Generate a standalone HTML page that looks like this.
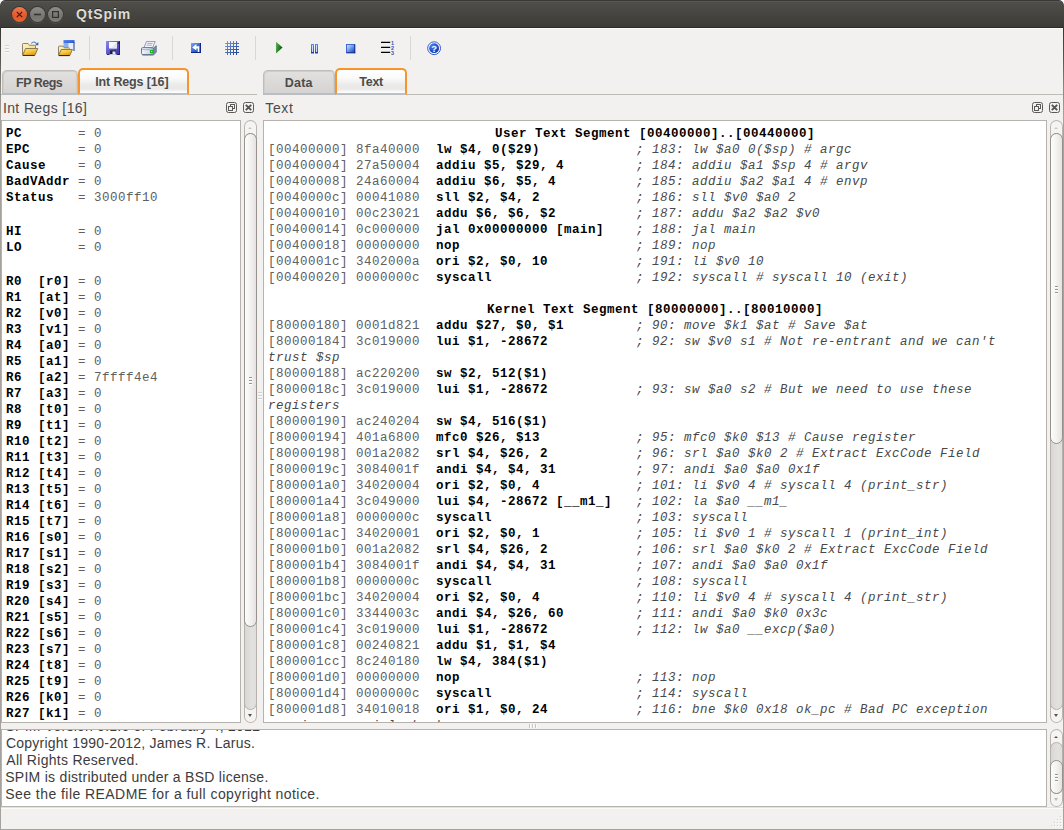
<!DOCTYPE html>
<html><head><meta charset="utf-8"><title>QtSpim</title>
<style>
*{box-sizing:border-box;margin:0;padding:0}
html,body{width:1064px;height:830px;overflow:hidden;background:#fff}
body{font-family:"Liberation Sans",sans-serif;position:relative}
.abs{position:absolute}
#win{position:absolute;left:0;top:0;width:1064px;height:830px;background:#f2f1f0;border-radius:5px 5px 0 0;overflow:hidden}
#bl,#br,#bb{position:absolute;background:#a5a29d}
#bl,#br{background:linear-gradient(#35342f 0,#55534e 30px,#8a8782 60px,#a5a29d 90px)}
#hl{position:absolute;left:1px;top:28px;width:1062px;height:1px;background:#fbfbfa}
#bl{left:0;top:27px;width:1px;height:803px}
#br{left:1063px;top:27px;width:1px;height:803px}
#bb{left:0;top:829px;width:1064px;height:1px}
#title{position:absolute;left:0;top:0;width:1064px;height:28px;border-radius:5px 5px 0 0;
 background:linear-gradient(#3a3935 0,#3a3935 1px,#59574f 1px,#59574f 2px,#4f4e49 2px,#3c3b37 27px,#2c2b28 27px)}
.tx{position:absolute;white-space:pre;line-height:20px}
.tx.title{font-weight:bold;color:#dfdbd2;text-shadow:0 -1px 0 rgba(0,0,0,.4)}
.tx.tb{font-weight:bold;color:#4c4c4c}
.tx.dk{color:#4a4a4a}
.tx.cn{color:#3c3c3c}
.wb{position:absolute;top:7px;width:15px;height:15px;border-radius:50%;box-shadow:0 0 0 1px rgba(40,38,34,.55),0 1px 0 1px rgba(255,255,255,.08)}
.wb.c{left:12px;background:linear-gradient(#f0794f,#e4572a 60%,#e8652f)}
.wb.g{background:linear-gradient(#8e8d87,#76756f 60%,#7d7c76)}
.wb svg{position:absolute;left:0;top:0}
/* panels */
.panel{position:absolute;background:#fff;border:1px solid #b6b2ad;overflow:hidden}
.mono{font-family:"Liberation Mono",monospace;font-size:12.5px;letter-spacing:0.4985px;line-height:16px;white-space:pre;color:#606060}
.mono b{color:#000;font-weight:bold}
.mono i{color:#484848;font-style:italic}
.ln{height:16px}
.bl{height:18px}
.hd{text-align:center}
/* scrollbars */
.sb{position:absolute;width:13px;border-radius:6.5px;background:#f5f4f3;box-shadow:inset 0 0 0 1px #b9b5b0}
.sb .tr{position:absolute;left:0;width:13px;border:1px solid #b5b1ac;border-radius:6.5px;background:linear-gradient(90deg,#d9d6d4,#e3e1df 60%,#e0dedc)}
.sb .sl{position:absolute;left:0;width:13px;border:1px solid #96938e;border-radius:6.5px;background:linear-gradient(90deg,#fdfdfd,#f3f2f1 50%,#e4e3e1)}
.sb .sl u{position:absolute;left:4px;width:3px;height:2px;background:linear-gradient(#98958f 50%,#fff 50%)}
.ar{position:absolute;left:4px;width:0;height:0;border-left:2.5px solid transparent;border-right:2.5px solid transparent}
.ar.up{border-bottom:2.5px solid #c9c7c3}
.ar.dn{border-top:3px solid #555451}
.ar.dn.dis{border-top-color:#bdbab6}
.ar.up.en{border-bottom-color:#555451}
/* dock title */
.dt{position:absolute;font-size:14.7px;line-height:20px;color:#4a4a4a;white-space:pre}
.db{position:absolute;width:11px;height:11px;border:1px solid #5b5a56;border-radius:2.5px}
/* tabs */
.tab{position:absolute;font-weight:bold;font-size:13.3px;color:#4c4c4c;text-align:center;white-space:pre}
.tab.in{top:70px;height:25px;border:1px solid #c0bdb8;border-bottom:2px solid #b9bec2;border-radius:5px 5px 0 0;background:linear-gradient(#e1e0de,#dad9d7 60%,#d4d3d1);box-shadow:inset 1px 1px 0 #d0cecb,inset -1px 0 0 #d0cecb}
.tab.ac{top:68px;height:27px;border:2px solid #f7952c;border-bottom:2px solid #bcc0c3;border-radius:5px 5px 0 0;background:linear-gradient(#fff 0,#fafafa 8px,#eaeae9 15px,#e9e8e7 19px,#fbfbfb 22px,#fff);line-height:22px}
.tl{position:absolute;top:94px;height:1px;background:#bfbcb7}
.sep{position:absolute;top:36px;width:1px;height:24px;background:#dad8d5}
.ic{position:absolute}
</style></head>
<body>
<div id="win">
 <div id="title">
  <div class="wb c"><svg width="15" height="15" viewBox="0 0 15 15"><path d="M4.8 4.8l5.4 5.4M10.2 4.8l-5.4 5.4" stroke="#3c1a10" stroke-width="1.1" fill="none"/></svg></div>
  <div class="wb g" style="left:30px"><svg width="15" height="15" viewBox="0 0 15 15"><path d="M4 7.5h7" stroke="#33322e" stroke-width="1.3" fill="none"/></svg></div>
  <div class="wb g" style="left:48px"><svg width="15" height="15" viewBox="0 0 15 15"><rect x="4.6" y="4.6" width="5.8" height="5.8" stroke="#33322e" stroke-width="1.2" fill="none"/></svg></div>
  <span class="tx title" style="left:75.90px;top:4.00px;font-size:14px;letter-spacing:0.900px">QtSpim</span>
 </div>

 <!-- toolbar -->
 <div class="abs" style="left:5px;top:45px;width:4px;height:8px;background:repeating-linear-gradient(#d3d1ce 0,#d3d1ce 1px,#fbfbfa 1px,#fbfbfa 2px,transparent 2px,transparent 3px)"></div>
 
 <svg width="0" height="0" style="position:absolute"><defs>
  <linearGradient id="gf" x1="0" y1="0" x2="0.6" y2="1"><stop offset="0" stop-color="#fde58a"/><stop offset="0.55" stop-color="#f7c63e"/><stop offset="1" stop-color="#dc9a12"/></linearGradient>
  <linearGradient id="gb" x1="0" y1="0" x2="1" y2="1"><stop offset="0" stop-color="#fdf4c2"/><stop offset="1" stop-color="#f0d578"/></linearGradient>
  <linearGradient id="gs" x1="0" y1="0" x2="1" y2="1"><stop offset="0" stop-color="#8c8aec"/><stop offset="0.5" stop-color="#5a57c9"/><stop offset="1" stop-color="#363398"/></linearGradient>
  <linearGradient id="gq" x1="0" y1="0" x2="1" y2="1"><stop offset="0" stop-color="#7ea5f2"/><stop offset="0.5" stop-color="#3b68d8"/><stop offset="1" stop-color="#102f9c"/></linearGradient>
  <linearGradient id="gg" x1="0" y1="0" x2="1" y2="1"><stop offset="0" stop-color="#7fa2dd"/><stop offset="1" stop-color="#17398a"/></linearGradient>
  <linearGradient id="gp" x1="0" y1="0" x2="1" y2="0.4"><stop offset="0" stop-color="#6bb06b"/><stop offset="0.5" stop-color="#2f8a2f"/><stop offset="1" stop-color="#0b560b"/></linearGradient>
  <linearGradient id="gst" x1="0" y1="0" x2="1" y2="1"><stop offset="0" stop-color="#cfe0fb"/><stop offset="0.5" stop-color="#6f97e8"/><stop offset="1" stop-color="#1f48bd"/></linearGradient>
  <linearGradient id="gpa" x1="0" y1="0" x2="0" y2="1"><stop offset="0" stop-color="#5f8ae6"/><stop offset="0.8" stop-color="#2f5ccc"/><stop offset="1" stop-color="#08237a"/></linearGradient>
  <linearGradient id="gw" x1="0" y1="0" x2="1" y2="1"><stop offset="0" stop-color="#5b8df0"/><stop offset="1" stop-color="#2a55c8"/></linearGradient>
  <linearGradient id="gpr" x1="0" y1="0" x2="1" y2="0"><stop offset="0" stop-color="#f4f6fb"/><stop offset="0.6" stop-color="#d5dcec"/><stop offset="1" stop-color="#8f9cb8"/></linearGradient>
  <radialGradient id="gh" cx="0.35" cy="0.3" r="0.8"><stop offset="0" stop-color="#4f86f2"/><stop offset="0.6" stop-color="#1f4fd0"/><stop offset="1" stop-color="#0a2a9a"/></radialGradient>
 </defs></svg>
 <!-- open file -->
 <svg class="ic" style="left:22px;top:40px" width="17" height="16" viewBox="0 0 17 16">
  <path d="M0.5 15V4.2q0-.7.7-.7H6l1.4 1.8h5.4q.7 0 .7.7V8" fill="url(#gb)" stroke="#8f8468" stroke-width="1"/>
  <path d="M0.6 15.4L3.6 8.5h12.2l-3 6.9z" fill="url(#gf)" stroke="#8b7a52" stroke-width="1" stroke-linejoin="round"/>
  <path d="M1 15.5h11.5" stroke="#3a2f14" stroke-width="1"/>
  <path d="M9.2 3.5q2.7-3 5.3.2" stroke="#5b7cb3" stroke-width="1.1" fill="none"/>
  <path d="M16.3 1.9v3.3h-3.2z" fill="#3a5f98"/>
 </svg>
 <!-- open window file -->
 <svg class="ic" style="left:58px;top:39px" width="17" height="18" viewBox="0 0 17 18">
  <rect x="5.5" y="1" width="11" height="11" fill="#e9effc"/>
  <rect x="5.5" y="1" width="11" height="3" fill="url(#gw)"/>
  <rect x="5.5" y="4" width="5" height="8" fill="#8fb0ee"/>
  <rect x="11.5" y="4" width="4" height="8" fill="#e6eefc"/>
  <rect x="15.5" y="3" width="1" height="9" fill="#20427e"/>
  <path d="M0.5 16.4V7.8q0-.7.7-.7H5l1.3 1.7h4.4q.7 0 .7.7V10" fill="url(#gb)" stroke="#8f8468" stroke-width="1"/>
  <path d="M0.6 16.5L3.2 10.5h11.2l-2.6 6z" fill="url(#gf)" stroke="#8b7a52" stroke-width="1" stroke-linejoin="round"/>
  <path d="M1 16.6h10.6" stroke="#2a200c" stroke-width="1"/>
 </svg>
 <!-- save -->
 <svg class="ic" style="left:106px;top:41px" width="14" height="14" viewBox="0 0 14 14">
  <path d="M0 0h14v14H1.3L0 12.7z" fill="url(#gs)"/>
  <rect x="13" y="0" width="1" height="14" fill="#25237a"/><rect x="1" y="13" width="13" height="1" fill="#25237a"/>
  <rect x="3" y="1" width="8" height="6.5" fill="#f7f8fc"/><path d="M11 1v6.5H5z" fill="#d6dbea" opacity=".7"/>
  <rect x="12" y="1.5" width="1" height="1.5" fill="#1c1a5a"/>
  <rect x="4" y="9.5" width="6" height="4.5" fill="#20203a"/><rect x="6.5" y="10.5" width="3" height="3" fill="#e4e6f0"/>
  <rect x="3.5" y="13" width="7" height="1" fill="#c8cad8"/>
 </svg>
 <!-- print -->
 <svg class="ic" style="left:141px;top:41px" width="16" height="15" viewBox="0 0 16 15">
  <path d="M12.6 7l2.7-2.4v6.6l-2.7 2.6z" fill="#7b89a6" stroke="#5f6e8d" stroke-width=".8" stroke-linejoin="round"/>
  <path d="M5.6 0.4h8.6l-2.6 6.2H3z" fill="#f4f6fb" stroke="#8290ab" stroke-width=".9" stroke-linejoin="round"/>
  <path d="M6.4 2.4h5.3M5.6 4.2h5.3" stroke="#9aa6bd" stroke-width=".9"/>
  <rect x="0.5" y="6.6" width="12.2" height="7" rx="1.4" fill="url(#gpr)" stroke="#6b7a99" stroke-width="1"/>
  <path d="M1.2 8.6h8" stroke="#9aa5bc" stroke-width=".8"/>
  <rect x="9" y="9" width="3.2" height="3.1" fill="#12b81c"/><rect x="10" y="9.9" width="1.2" height="1.2" fill="#a8ff70"/>
  <path d="M1.5 14h11" stroke="#5a6783" stroke-width=".9"/>
 </svg>
 <!-- reinit -->
 <svg class="ic" style="left:191px;top:43px" width="10" height="10" viewBox="0 0 10 10">
  <rect width="10" height="10" fill="url(#gq)"/><rect x="9" y="0" width="1" height="10" fill="#0b2686"/><rect x="0" y="9" width="10" height="1" fill="#0b2686"/>
  <path d="M1.2 4.4L5.4 1.1V3.3H8.3V9H6.7V5.5H5.4V7.6z" fill="#fff"/>
 </svg>
 <!-- grid -->
 <svg class="ic" style="left:225px;top:41px" width="14" height="14" viewBox="0 0 14 14">
  <path d="M2.5 0v14M5.5 0v14M8.5 0v14M11.5 0v14M0 2.5h14M0 5.5h14M0 8.5h14M0 11.5h14" stroke="url(#gg)" stroke-width="1" fill="none"/>
 </svg>
 <!-- run -->
 <svg class="ic" style="left:275px;top:41px" width="9" height="14" viewBox="0 0 9 14">
  <path d="M1 0.8L7.6 6.6L1 12.4z" fill="url(#gp)"/>
 </svg>
 <!-- pause -->
 <svg class="ic" style="left:311px;top:44px" width="8" height="10" viewBox="0 0 8 10">
  <rect x="0" y="0" width="3" height="9.4" fill="url(#gpa)"/><rect x="1" y="1" width="1" height="7" fill="#cddefb"/>
  <rect x="4" y="0" width="3" height="9.4" fill="url(#gpa)"/><rect x="5" y="1" width="1" height="7" fill="#cddefb"/>
 </svg>
 <!-- stop -->
 <svg class="ic" style="left:346px;top:44px" width="10" height="10" viewBox="0 0 10 10">
  <rect x="0" y="0" width="9.2" height="9.2" fill="#3e68d6"/>
  <rect x="8.2" y="0.5" width="1" height="8.7" fill="#0b2686"/><rect x="0.5" y="8.2" width="8.7" height="1" fill="#0b2686"/>
  <rect x="1" y="1" width="7.2" height="7.2" fill="url(#gst)"/>
 </svg>
 <!-- single step -->
 <svg class="ic" style="left:380px;top:39px" width="17" height="18" viewBox="0 0 17 18">
  <path d="M1 3.4h9.2M1 8.4h9.2M1 13.4h9.2" stroke="#000" stroke-width="1.4"/>
  <g font-family="Liberation Sans, sans-serif" font-weight="bold" font-size="5.4" fill="#2d55b5"><text x="11" y="5.6">1</text><text x="11" y="10.6">2</text><text x="11" y="15.6">3</text></g>
 </svg>
 <!-- help -->
 <svg class="ic" style="left:426px;top:40px" width="16" height="16" viewBox="0 0 16 16">
  <circle cx="8.1" cy="8.2" r="6.4" fill="#fff" stroke="#2f5ad0" stroke-width="1"/>
  <circle cx="8.1" cy="8.2" r="4.9" fill="url(#gh)"/>
  <text x="8.1" y="11.6" text-anchor="middle" font-family="Liberation Sans, sans-serif" font-weight="bold" font-size="9.5" fill="#fff">?</text>
 </svg>

 <div class="sep" style="left:89px"></div>
 <div class="sep" style="left:172px"></div>
 <div class="sep" style="left:255px"></div>
 <div class="sep" style="left:410px"></div>

 <!-- tabs -->
 <div class="tl" style="left:1px;width:256px"></div>
 <div class="tl" style="left:263px;width:800px"></div>
 <div class="tab in" style="left:2px;width:76px"></div><span class="tx tb" style="left:16.10px;top:73.00px;font-size:12.5px;letter-spacing:-0.517px">FP Regs</span>
 <div class="tab ac" style="left:78px;width:111px"></div><span class="tx tb" style="left:95.20px;top:72.00px;font-size:12.5px;letter-spacing:-0.133px">Int Regs [16]</span>
 <div class="tab in" style="left:263px;width:72px"></div><span class="tx tb" style="left:284.70px;top:73.00px;font-size:12.5px;letter-spacing:0.233px">Data</span>
 <div class="tab ac" style="left:335px;width:72px"></div><span class="tx tb" style="left:359.30px;top:72.00px;font-size:12.5px;letter-spacing:-0.267px">Text</span>

 <!-- dock titles -->
 <span class="tx dk" style="left:2.90px;top:98.00px;font-size:14px;letter-spacing:0.383px">Int Regs [16]</span>
 <span class="tx dk" style="left:265.20px;top:98.00px;font-size:14px;letter-spacing:0.700px">Text</span>
 
 <div class="db" style="left:226px;top:102px"><svg class="abs" style="left:0;top:0" width="9" height="9" viewBox="0 0 9 9"><rect x="3.5" y="1.5" width="4" height="4" fill="none" stroke="#5b5a56"/><rect x="1.5" y="3.5" width="4" height="4" fill="#f2f1f0" stroke="#5b5a56"/></svg></div>
 <div class="db" style="left:243px;top:102px"><svg class="abs" style="left:0;top:0" width="9" height="9" viewBox="0 0 9 9"><path d="M1.8 1.8l5.4 5.4M7.2 1.8l-5.4 5.4" stroke="#55544f" stroke-width="1.9" fill="none"/></svg></div>
 <div class="db" style="left:1032px;top:102px"><svg class="abs" style="left:0;top:0" width="9" height="9" viewBox="0 0 9 9"><rect x="3.5" y="1.5" width="4" height="4" fill="none" stroke="#5b5a56"/><rect x="1.5" y="3.5" width="4" height="4" fill="#f2f1f0" stroke="#5b5a56"/></svg></div>
 <div class="db" style="left:1049px;top:102px"><svg class="abs" style="left:0;top:0" width="9" height="9" viewBox="0 0 9 9"><path d="M1.8 1.8l5.4 5.4M7.2 1.8l-5.4 5.4" stroke="#55544f" stroke-width="1.9" fill="none"/></svg></div>

 <!-- left panel -->
 <div class="panel mono" style="left:1px;top:120px;width:240px;height:603px;padding:5px 0 0 4px"><div class="ln"><b>PC       </b>= 0</div><div class="ln"><b>EPC      </b>= 0</div><div class="ln"><b>Cause    </b>= 0</div><div class="ln"><b>BadVAddr </b>= 0</div><div class="ln"><b>Status   </b>= 3000ff10</div><div class="bl"></div><div class="ln"><b>HI       </b>= 0</div><div class="ln"><b>LO       </b>= 0</div><div class="bl"></div><div class="ln"><b>R0  [r0] </b>= 0</div><div class="ln"><b>R1  [at] </b>= 0</div><div class="ln"><b>R2  [v0] </b>= 0</div><div class="ln"><b>R3  [v1] </b>= 0</div><div class="ln"><b>R4  [a0] </b>= 0</div><div class="ln"><b>R5  [a1] </b>= 0</div><div class="ln"><b>R6  [a2] </b>= 7ffff4e4</div><div class="ln"><b>R7  [a3] </b>= 0</div><div class="ln"><b>R8  [t0] </b>= 0</div><div class="ln"><b>R9  [t1] </b>= 0</div><div class="ln"><b>R10 [t2] </b>= 0</div><div class="ln"><b>R11 [t3] </b>= 0</div><div class="ln"><b>R12 [t4] </b>= 0</div><div class="ln"><b>R13 [t5] </b>= 0</div><div class="ln"><b>R14 [t6] </b>= 0</div><div class="ln"><b>R15 [t7] </b>= 0</div><div class="ln"><b>R16 [s0] </b>= 0</div><div class="ln"><b>R17 [s1] </b>= 0</div><div class="ln"><b>R18 [s2] </b>= 0</div><div class="ln"><b>R19 [s3] </b>= 0</div><div class="ln"><b>R20 [s4] </b>= 0</div><div class="ln"><b>R21 [s5] </b>= 0</div><div class="ln"><b>R22 [s6] </b>= 0</div><div class="ln"><b>R23 [s7] </b>= 0</div><div class="ln"><b>R24 [t8] </b>= 0</div><div class="ln"><b>R25 [t9] </b>= 0</div><div class="ln"><b>R26 [k0] </b>= 0</div><div class="ln"><b>R27 [k1] </b>= 0</div><div class="ln"><b>R28 [gp] </b>= 0</div></div>
 <div class="sb" style="left:244px;top:120px;height:603px">
   <div class="ar up" style="top:7px"></div>
   <div class="tr" style="top:13px;height:577px"></div>
   <div class="sl" style="top:13px;height:494px"><u style="top:243px"></u><u style="top:246px"></u><u style="top:249px"></u></div>
   <div class="ar dn" style="top:594px"></div>
 </div>
 <!-- vertical splitter grip -->
 <div class="abs" style="left:258px;top:392px;width:4px;height:8px;background:repeating-linear-gradient(#d3d1ce 0,#d3d1ce 1px,#fbfbfa 1px,#fbfbfa 2px,transparent 2px,transparent 3px)"></div>

 <!-- right panel -->
 <div class="panel mono" style="left:263px;top:120px;width:784px;height:603px;padding:5px 0 0 4px"><div style="width:774px"><div class="ln hd"><b>User Text Segment [00400000]..[00440000]</b></div><div class="ln">[00400000] 8fa40000  <b>lw $4, 0($29)            </b><i>; 183: lw $a0 0($sp) # argc</i></div><div class="ln">[00400004] 27a50004  <b>addiu $5, $29, 4         </b><i>; 184: addiu $a1 $sp 4 # argv</i></div><div class="ln">[00400008] 24a60004  <b>addiu $6, $5, 4          </b><i>; 185: addiu $a2 $a1 4 # envp</i></div><div class="ln">[0040000c] 00041080  <b>sll $2, $4, 2            </b><i>; 186: sll $v0 $a0 2</i></div><div class="ln">[00400010] 00c23021  <b>addu $6, $6, $2          </b><i>; 187: addu $a2 $a2 $v0</i></div><div class="ln">[00400014] 0c000000  <b>jal 0x00000000 [main]    </b><i>; 188: jal main</i></div><div class="ln">[00400018] 00000000  <b>nop                      </b><i>; 189: nop</i></div><div class="ln">[0040001c] 3402000a  <b>ori $2, $0, 10           </b><i>; 191: li $v0 10</i></div><div class="ln">[00400020] 0000000c  <b>syscall                  </b><i>; 192: syscall # syscall 10 (exit)</i></div><div class="ln"></div><div class="ln hd"><b>Kernel Text Segment [80000000]..[80010000]</b></div><div class="ln">[80000180] 0001d821  <b>addu $27, $0, $1         </b><i>; 90: move $k1 $at # Save $at</i></div><div class="ln">[80000184] 3c019000  <b>lui $1, -28672           </b><i>; 92: sw $v0 s1 # Not re-entrant and we can't</i></div><div class="ln"><i>trust $sp</i></div><div class="ln">[80000188] ac220200  <b>sw $2, 512($1)           </b></div><div class="ln">[8000018c] 3c019000  <b>lui $1, -28672           </b><i>; 93: sw $a0 s2 # But we need to use these</i></div><div class="ln"><i>registers</i></div><div class="ln">[80000190] ac240204  <b>sw $4, 516($1)           </b></div><div class="ln">[80000194] 401a6800  <b>mfc0 $26, $13            </b><i>; 95: mfc0 $k0 $13 # Cause register</i></div><div class="ln">[80000198] 001a2082  <b>srl $4, $26, 2           </b><i>; 96: srl $a0 $k0 2 # Extract ExcCode Field</i></div><div class="ln">[8000019c] 3084001f  <b>andi $4, $4, 31          </b><i>; 97: andi $a0 $a0 0x1f</i></div><div class="ln">[800001a0] 34020004  <b>ori $2, $0, 4            </b><i>; 101: li $v0 4 # syscall 4 (print_str)</i></div><div class="ln">[800001a4] 3c049000  <b>lui $4, -28672 [__m1_]   </b><i>; 102: la $a0 __m1_</i></div><div class="ln">[800001a8] 0000000c  <b>syscall                  </b><i>; 103: syscall</i></div><div class="ln">[800001ac] 34020001  <b>ori $2, $0, 1            </b><i>; 105: li $v0 1 # syscall 1 (print_int)</i></div><div class="ln">[800001b0] 001a2082  <b>srl $4, $26, 2           </b><i>; 106: srl $a0 $k0 2 # Extract ExcCode Field</i></div><div class="ln">[800001b4] 3084001f  <b>andi $4, $4, 31          </b><i>; 107: andi $a0 $a0 0x1f</i></div><div class="ln">[800001b8] 0000000c  <b>syscall                  </b><i>; 108: syscall</i></div><div class="ln">[800001bc] 34020004  <b>ori $2, $0, 4            </b><i>; 110: li $v0 4 # syscall 4 (print_str)</i></div><div class="ln">[800001c0] 3344003c  <b>andi $4, $26, 60         </b><i>; 111: andi $a0 $k0 0x3c</i></div><div class="ln">[800001c4] 3c019000  <b>lui $1, -28672           </b><i>; 112: lw $a0 __excp($a0)</i></div><div class="ln">[800001c8] 00240821  <b>addu $1, $1, $4          </b></div><div class="ln">[800001cc] 8c240180  <b>lw $4, 384($1)           </b></div><div class="ln">[800001d0] 00000000  <b>nop                      </b><i>; 113: nop</i></div><div class="ln">[800001d4] 0000000c  <b>syscall                  </b><i>; 114: syscall</i></div><div class="ln">[800001d8] 34010018  <b>ori $1, $0, 24           </b><i>; 116: bne $k0 0x18 ok_pc # Bad PC exception</i></div><div class="ln"><i>requires special checks</i></div></div></div>
 <div class="sb" style="left:1050px;top:120px;height:603px">
   <div class="ar up" style="top:7px"></div>
   <div class="tr" style="top:13px;height:577px"></div>
   <div class="sl" style="top:13px;height:311px"><u style="top:152px"></u><u style="top:155px"></u><u style="top:158px"></u></div>
   <div class="ar dn" style="top:594px"></div>
 </div>

 <!-- horizontal splitter grip -->
 <div class="abs" style="left:529px;top:724px;width:8px;height:4px;background:repeating-linear-gradient(90deg,#cac7c3 0,#cac7c3 1px,#fbfbfa 1px,#fbfbfa 2px,transparent 2px,transparent 3px)"></div>

 <!-- console -->
 <div class="panel" style="left:1px;top:729px;width:1046px;height:78px">
  <span class="tx cn" style="left:3.50px;top:-14.00px;font-size:14px;letter-spacing:0.230px">SPIM Version 9.1.6 of February 4, 2012</span><span class="tx cn" style="left:3.90px;top:3.00px;font-size:14px;letter-spacing:0.243px">Copyright 1990-2012, James R. Larus.</span><span class="tx cn" style="left:4.30px;top:20.00px;font-size:14px;letter-spacing:0.279px">All Rights Reserved.</span><span class="tx cn" style="left:3.20px;top:37.00px;font-size:14px;letter-spacing:0.282px">SPIM is distributed under a BSD license.</span><span class="tx cn" style="left:3.30px;top:54.00px;font-size:14px;letter-spacing:0.443px">See the file README for a full copyright notice.</span>
 </div>
 <div class="sb" style="left:1050px;top:729px;height:78px">
   <div class="ar up en" style="top:7px"></div>
   <div class="tr" style="top:13px;height:52px"></div>
   <div class="sl" style="top:31px;height:34px"><u style="top:13px"></u><u style="top:16px"></u><u style="top:19px"></u></div>
   <div class="ar dn dis" style="top:69px"></div>
 </div>

 <!-- size grip -->
 <svg class="abs" style="left:1049px;top:814px" width="14" height="14" viewBox="0 0 14 14">
  <g fill="#d2d0cc"><rect x="11" y="2" width="1" height="1"/><rect x="8" y="5" width="1" height="1"/><rect x="11" y="5" width="1" height="1"/><rect x="5" y="8" width="1" height="1"/><rect x="8" y="8" width="1" height="1"/><rect x="11" y="8" width="1" height="1"/><rect x="2" y="11" width="1" height="1"/><rect x="5" y="11" width="1" height="1"/><rect x="8" y="11" width="1" height="1"/><rect x="11" y="11" width="1" height="1"/></g>
  <g fill="#fff"><rect x="12" y="3" width="1" height="1"/><rect x="9" y="6" width="1" height="1"/><rect x="12" y="6" width="1" height="1"/><rect x="6" y="9" width="1" height="1"/><rect x="9" y="9" width="1" height="1"/><rect x="12" y="9" width="1" height="1"/><rect x="3" y="12" width="1" height="1"/><rect x="6" y="12" width="1" height="1"/><rect x="9" y="12" width="1" height="1"/><rect x="12" y="12" width="1" height="1"/></g>
 </svg>

 <div id="hl"></div><div class="abs" style="left:1px;top:807px;width:1062px;height:2px;background:linear-gradient(#e4e2df 50%,#fbfbfa 50%)"></div><div id="bl"></div><div id="br"></div><div id="bb"></div>
</div>
</body></html>
